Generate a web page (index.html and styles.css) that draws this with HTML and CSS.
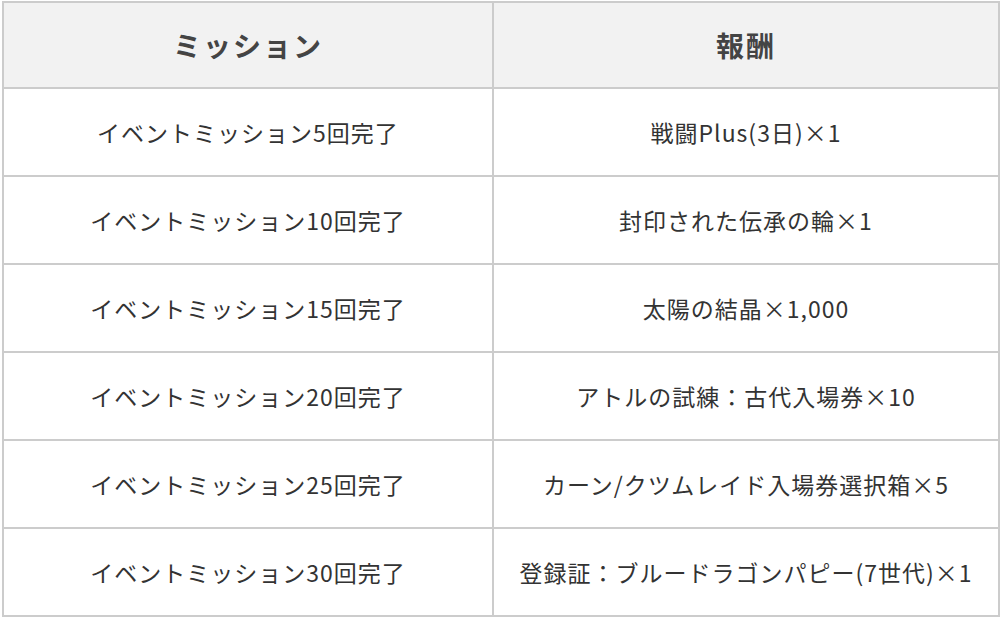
FILE: index.html
```html
<!DOCTYPE html>
<html lang="ja">
<head>
<meta charset="utf-8">
<link rel="stylesheet" href="styles.css">
</head>
<body>
<div class="wrap">
<table class="rewards">
  <thead>
    <tr><th class="col-mission">ミッション</th><th>報酬</th></tr>
  </thead>
  <tbody>
    <tr><td>イベントミッション5回完了</td><td>戦闘Plus(3日)×1</td></tr>
    <tr><td>イベントミッション10回完了</td><td>封印された伝承の輪×1</td></tr>
    <tr><td>イベントミッション15回完了</td><td>太陽の結晶×1,000</td></tr>
    <tr><td>イベントミッション20回完了</td><td>アトルの試練：古代入場券×10</td></tr>
    <tr><td>イベントミッション25回完了</td><td>カーン/クツムレイド入場券選択箱×5</td></tr>
    <tr><td>イベントミッション30回完了</td><td>登録証：ブルードラゴンパピー(7世代)×1</td></tr>
  </tbody>
</table>
</div>
</body>
</html>
```
FILE: styles.css
```css
html, body {
  margin: 0;
  padding: 0;
  background: #fff;
}
.wrap {
  padding: 1px 3px 0 2px;
}
.rewards {
  width: 998px;
  border-collapse: collapse;
  table-layout: fixed;
  font-family: "Noto Sans CJK JP", "Noto Sans", sans-serif;
  color: #333;
}
.rewards th,
.rewards td {
  border: 2px solid #ccc;
  text-align: center;
  vertical-align: middle;
  height: 88px;
  padding: 0 4px;
  box-sizing: border-box;
}
.rewards th {
  height: 86px;
  background: #f2f2f2;
  font-size: 28px;
  font-weight: bold;
  letter-spacing: 2px;
  color: #444;
}
.rewards .col-mission {
  width: 490px;
}
.rewards td {
  font-size: 23px;
  letter-spacing: 1px;
}
```
